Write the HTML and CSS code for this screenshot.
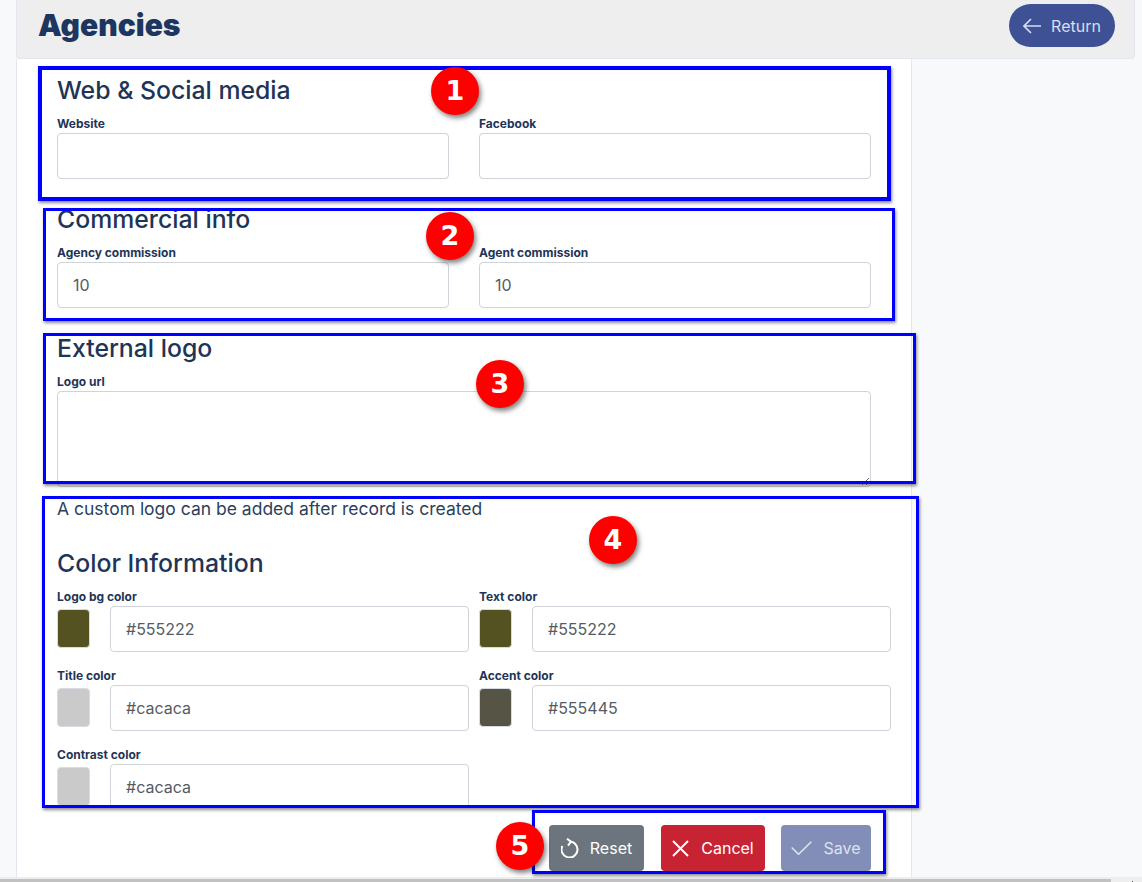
FILE: index.html
```html
<!DOCTYPE html>
<html lang="en">
<head>
    <meta charset="UTF-8">
    <title>Agencies</title>
    <link rel="stylesheet" href="styles.css">
</head>
<body>
    <div class="page">
        <header class="topBar">
            <h1>Agencies</h1>
            <a class="returnBtn" href="#">
                <svg class="icon" viewBox="0 0 18 16"><path d="M18 8H1.200M8 1L1 8l7 7"/></svg>
                Return
            </a>
        </header>

        <div class="panel">
            <form class="formBody">
                <!-- web and social -->
                <h2>Web &amp; Social media</h2>
                <div class="twoCols">
                    <div>
                        <label>Website</label>
                        <input type="text">
                    </div>
                    <div>
                        <label>Facebook</label>
                        <input type="text">
                    </div>
                </div>

                <h2>Commercial info</h2>
                <div class="twoCols">
                    <div>
                        <label>Agency commission</label>
                        <input type="text" value="10">
                    </div>
                    <div>
                        <label>Agent commission</label>
                        <input type="text" value="10">
                    </div>
                </div>

                <h2>External logo</h2>
                <div class="logoField">
                    <label>Logo url</label>
                    <textarea></textarea>
                </div>
                <p class="logoNote">A custom logo can be added after record is created</p>

                <!-- colors -->
                <h2 class="colorTitle">Color Information</h2>
                <div class="colorGrid">
                    <div>
                        <label>Logo bg color</label>
                        <div class="colorRow">
                            <span class="swatch olive"></span>
                            <input type="text" value="#555222">
                        </div>
                    </div>
                    <div>
                        <label>Text color</label>
                        <div class="colorRow">
                            <span class="swatch olive"></span>
                            <input type="text" value="#555222">
                        </div>
                    </div>
                    <div>
                        <label>Title color</label>
                        <div class="colorRow">
                            <span class="swatch grey"></span>
                            <input type="text" value="#cacaca">
                        </div>
                    </div>
                    <div>
                        <label>Accent color</label>
                        <div class="colorRow">
                            <span class="swatch stone"></span>
                            <input type="text" value="#555445">
                        </div>
                    </div>
                    <div>
                        <label>Contrast color</label>
                        <div class="colorRow">
                            <span class="swatch grey"></span>
                            <input type="text" value="#cacaca">
                        </div>
                    </div>
                </div>
            </form>

            <div class="formFooter">
                <button type="button" class="btn resetBtn">
                    <svg class="icon tall" viewBox="0 0 18 20"><path d="M8.500 3.500A8 8 0 1 1 1.300 8M6 0.700l4 3-3 4"/></svg>
                    Reset
                </button>
                <button type="button" class="btn cancelBtn">
                    <svg class="icon square" viewBox="0 0 17 17"><path d="M1 1l15 15M16 1L1 16"/></svg>
                    Cancel
                </button>
                <button type="button" class="btn saveBtn">
                    <svg class="icon wide" viewBox="0 0 21 14"><path d="M0.700 6.500l6.800 6.800L20.300 0.700"/></svg>
                    Save
                </button>
            </div>
        </div>
    </div>

    <div class="scrollBar">
        <div class="scrollTrack"></div>
        <span class="scrollArrow"></span>
    </div>

    <!-- annotations on top of the screenshot -->
    <div class="mark box1"></div>
    <div class="mark box2"></div>
    <div class="mark box3"></div>
    <div class="mark box4"></div>
    <div class="mark box5"></div>
    <div class="badge badge1">1</div>
    <div class="badge badge2">2</div>
    <div class="badge badge3">3</div>
    <div class="badge badge4">4</div>
    <div class="badge badge5">5</div>
</body>
</html>
```

FILE: styles.css
```css
* {
    box-sizing: border-box;
}

body {
    margin: 0;
    height: 882px;
    overflow: hidden;
    background: #f8f9fa;
    font-family: Inter, "Liberation Sans", sans-serif;
    color: #1e3557;
    position: relative;
}

.page {
    padding-left: 16px;
}

.topBar {
    width: 1119px;
    height: 59px;
    background: #eeeeee;
    border: 1px solid #e3e6ec;
    border-top: 0;
    border-radius: 0 0 4px 4px;
    display: flex;
    justify-content: space-between;
    align-items: flex-start;
    padding: 4px 19px 0 21px;
}

.topBar h1 {
    margin: 2px 0 0;
    font-size: 30px;
    line-height: 38px;
    font-weight: 900;
    color: #1c3660;
}

.returnBtn {
    width: 106px;
    height: 43px;
    border-radius: 22px;
    background: #3f5195;
    color: #d5def2;
    font-size: 16px;
    text-decoration: none;
    display: flex;
    align-items: center;
    justify-content: center;
    gap: 10px;
}

.icon {
    width: 18px;
    height: 16px;
    fill: none;
    stroke: currentColor;
    stroke-width: 1.600;
}

.icon.tall {
    height: 20px;
    stroke-width: 2;
}

.icon.square {
    width: 17px;
    height: 17px;
    stroke-width: 2;
}

.icon.wide {
    width: 21px;
    height: 14px;
}

.panel {
    width: 896px;
    height: 819px;
    background: #ffffff;
    border-left: 1px solid #e3e6ec;
    border-right: 1px solid #e3e6ec;
}

.formBody {
    height: 747px;
    overflow: hidden;
    padding: 17px 0 0 40px;
}

h2 {
    margin: 0 0 10px;
    font-size: 24.800px;
    line-height: 29px;
    font-weight: 500;
    color: #1e3557;
}

.twoCols {
    display: grid;
    grid-template-columns: 392px 392px;
    column-gap: 30px;
    margin-bottom: 26px;
}

label {
    display: block;
    font-size: 12px;
    line-height: 18px;
    font-weight: 700;
}

input,
textarea {
    display: block;
    width: 100%;
    height: 46px;
    padding: 0 15px;
    border: 1px solid #ced4da;
    border-radius: 4px;
    background: #ffffff;
    font-family: inherit;
    font-size: 16px;
    color: #555b63;
}

.logoField {
    width: 814px;
}

textarea {
    height: 96px;
}

.logoNote {
    margin: 10px 0 28px;
    font-size: 17.500px;
    line-height: 24px;
    color: #2b3f5e;
}

.colorGrid {
    display: grid;
    grid-template-columns: 412px 412px;
    column-gap: 10px;
    row-gap: 15px;
}

.colorRow {
    display: flex;
    gap: 20px;
    align-items: flex-start;
}

.swatch {
    flex: none;
    width: 33px;
    height: 39px;
    margin-top: 3px;
    border: 1px solid #d8dce2;
    border-radius: 4px;
}

.olive {
    background: #555222;
}

.grey {
    background: #cacaca;
}

.stone {
    background: #555445;
}

.formFooter {
    display: flex;
    justify-content: flex-end;
    gap: 16px;
    padding: 19px 40px 0 0;
}

.btn {
    height: 46px;
    border: 0;
    border-radius: 4px;
    color: #ffffff;
    font-family: inherit;
    font-size: 16px;
    display: flex;
    align-items: center;
    justify-content: center;
    gap: 12px;
}

.resetBtn {
    width: 95px;
    margin-right: 1px;
    gap: 11px;
    background: #6c757d;
}

.cancelBtn {
    width: 104px;
    background: #c82333;
}

.saveBtn {
    width: 90px;
    gap: 11px;
    background: #828db8;
    color: #dde1ee;
}

.scrollBar {
    position: absolute;
    left: 0;
    right: 0;
    bottom: 0;
    height: 5px;
    padding-top: 2px;
    background: #eeeeee;
}

.scrollTrack {
    width: 1111px;
    height: 3px;
    background: #c1c1c1;
}

.scrollArrow {
    position: absolute;
    left: 1132px;
    bottom: 0;
    width: 1px;
    height: 1px;
    background: #505050;
}

.mark {
    position: absolute;
    border: 3px solid #0000ff;
    box-shadow: 1px 2px 3px rgba(0, 0, 0, 0.45);
}

.box1 {
    left: 38px;
    top: 66px;
    width: 853px;
    height: 135px;
    border-width: 4px;
}

.box2 {
    left: 43px;
    top: 208px;
    width: 852px;
    height: 113px;
}

.box3 {
    left: 43px;
    top: 333px;
    width: 873px;
    height: 151px;
}

.box4 {
    left: 42px;
    top: 496px;
    width: 877px;
    height: 312px;
}

.box5 {
    left: 532px;
    top: 810px;
    width: 354px;
    height: 64px;
}

.badge {
    position: absolute;
    width: 48px;
    height: 48px;
    border-radius: 50%;
    background: #ff0000;
    color: #ffffff;
    font-family: "DejaVu Sans", sans-serif;
    font-size: 27px;
    font-weight: 700;
    line-height: 48px;
    text-align: center;
    box-shadow: 2px 3px 5px rgba(0, 0, 0, 0.5);
}

.badge1 {
    left: 431px;
    top: 67px;
}

.badge2 {
    left: 426px;
    top: 212px;
}

.badge3 {
    left: 476px;
    top: 360px;
}

.badge4 {
    left: 589px;
    top: 516px;
}

.badge5 {
    left: 496px;
    top: 822px;
}
```
